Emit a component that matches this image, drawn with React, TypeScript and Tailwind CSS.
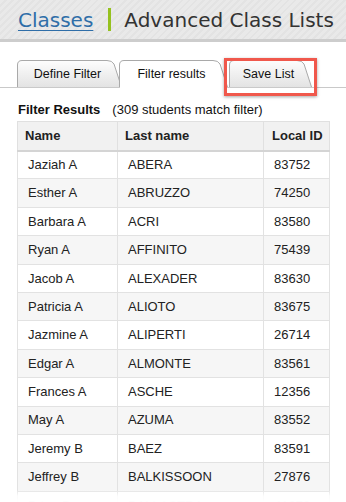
const rows: [string, string, string][] = [
  ["Jaziah A", "ABERA", "83752"],
  ["Esther A", "ABRUZZO", "74250"],
  ["Barbara A", "ACRI", "83580"],
  ["Ryan A", "AFFINITO", "75439"],
  ["Jacob A", "ALEXADER", "83630"],
  ["Patricia A", "ALIOTO", "83675"],
  ["Jazmine A", "ALIPERTI", "26714"],
  ["Edgar A", "ALMONTE", "83561"],
  ["Frances A", "ASCHE", "12356"],
  ["May A", "AZUMA", "83552"],
  ["Jeremy B", "BAEZ", "83591"],
  ["Jeffrey B", "BALKISSOON", "27876"],
  ["Brian B", "BALLASTRA", "41270"],
]

// folder-like tab outline
const Tab = ({ id, label, width, active }: { id: string; label: string; width: number; active?: boolean }) => {
  const h = 27
  const d = `M0.5,${h} V5 Q0.5,0.5 5,0.5 H${width - 15} Q${width - 10},0.5 ${width - 8},4 L${width - 0.5},${h}`
  return (
    <div className="relative h-[27px] flex items-center justify-center shrink-0" style={{ width }}>
      <svg className="absolute left-0 top-0" width={width} height={h + 1}>
        <defs>
          <linearGradient id={id} x1="0" y1="0" x2="0" y2="1">
            <stop offset="0" stopColor={active ? "#ffffff" : "#fdfdfd"} />
            <stop offset="1" stopColor={active ? "#ffffff" : "#e3e3e3"} />
          </linearGradient>
        </defs>
        <path d={d + " Z"} fill={`url(#${id})`} stroke="none" />
        <path d={d} fill="none" stroke="#a9a9a9" strokeWidth="1" />
        {active && <rect x="1" y={h - 1} width={width - 2} height="2" fill="#ffffff" />}
      </svg>
      <span className="relative text-[12.5px] text-[#111] pr-[4px] pt-[2px]">{label}</span>
    </div>
  )
}

const App = () => {
  return (
    <div className="relative w-[346px] h-[502px] overflow-hidden bg-white font-['Liberation_Sans',Arial,sans-serif]">
      <div className="h-[42px] flex items-center pl-[18px] bg-[repeating-linear-gradient(135deg,#e9e9e9_0px,#e9e9e9_3px,#e3e3e3_3px,#e3e3e3_5px)] border-b-[3px] border-[#cdcdcd] font-['DejaVu_Sans',Verdana,sans-serif] text-[20px]">
        <a href="/" className="text-[#2f6ea8] underline underline-offset-[3px] decoration-1">Classes</a>
        <span className="w-[3px] h-[23px] bg-[#95c11f] ml-[15px] mr-[13px]"></span>
        <span className="text-[#333]">Advanced Class Lists</span>
      </div>

      <div className="pl-[17px] mt-[18px] flex items-end border-b border-[#c9c9c9]">
        <Tab id="tabDefine" label="Define Filter" width={105} />
        <div className="-ml-[3px] relative"><Tab id="tabResults" label="Filter results" width={109} active /></div>
        <div className="ml-[1px]"><Tab id="tabSave" label="Save List" width={83} /></div>
      </div>

      <div className="absolute left-[224px] top-[58px] w-[93px] h-[38px] border-[3px] border-[#f0584c] shadow-[0_1px_3px_rgba(0,0,0,0.35)]"></div>

      <div className="px-[17px] mt-[14px]">
        <div className="text-[13px] text-[#111] leading-[15px] pl-[1px]">
          <span className="font-bold">Filter Results</span>
          <span className="ml-[12px]">(309 students match filter)</span>
        </div>
        <table className="mt-[4px] w-[312px] border-collapse table-fixed text-[13px] text-[#222]">
          <colgroup>
            <col className="w-[100px]" />
            <col className="w-[146px]" />
            <col className="w-[66px]" />
          </colgroup>
          <thead>
            <tr className="h-[29px] bg-[#f1f1f1]">
              <th className="text-left font-bold pl-[7px] border border-[#e0e0e0] border-b-2 border-b-[#d4d4d4]">Name</th>
              <th className="text-left font-bold pl-[7px] border border-[#e0e0e0] border-b-2 border-b-[#d4d4d4]">Last name</th>
              <th className="text-left font-bold pl-[8px] border border-[#e0e0e0] border-b-2 border-b-[#d4d4d4]">Local ID</th>
            </tr>
          </thead>
          <tbody>
            {rows.map((r, i) => (
              <tr key={r[2]} className={`h-[28.4px] ${i % 2 === 1 ? "bg-[#f6f6f6]" : "bg-white"}`}>
                <td className="pl-[10px] border border-[#e2e2e2]">{r[0]}</td>
                <td className="pl-[10px] border border-[#e2e2e2]">{r[1]}</td>
                <td className="pl-[10px] border border-[#e2e2e2]">{r[2]}</td>
              </tr>
            ))}
          </tbody>
        </table>
      </div>

      <div className="absolute left-0 right-0 bottom-0 h-[12px] bg-gradient-to-b from-white/0 via-white/85 to-white"></div>
    </div>
  )
}

export default App
